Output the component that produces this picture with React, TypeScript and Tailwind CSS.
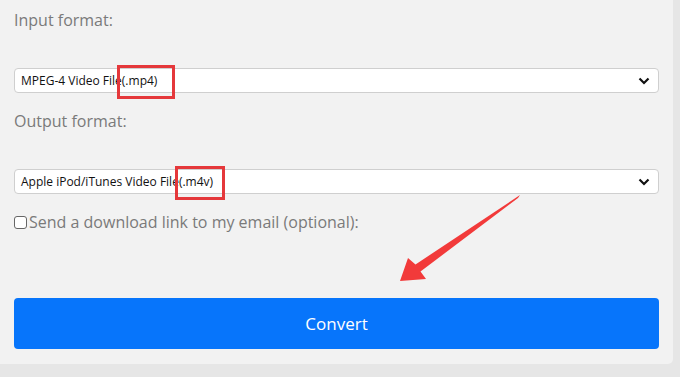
import React from "react";

const ChevronDown = () => (
  <svg width="12" height="8" viewBox="0 0 12 8" className="shrink-0">
    <path d="M1.5 1.5 L6 6 L10.5 1.5" fill="none" stroke="#111" strokeWidth="2.2" />
  </svg>
);

const FormatSelect = ({
  label,
  mark,
}: {
  label: string;
  mark: { left: number; width: number };
}) => (
  <div className="relative h-[25px] bg-white border border-[#cfcfcf] rounded-[4px] flex items-center justify-between pl-[6px] pr-[8px]">
    <span className="text-[12px] text-[#111]">{label}</span>
    <ChevronDown />
    {/* highlight box */}
    <div
      className="absolute top-[-4px] h-[34px] border-[3px] border-[#e5383b]"
      style={{ left: mark.left, width: mark.width }}
    />
  </div>
);

export default function App() {
  return (
    <div
      className="w-[680px] h-[377px] bg-[#e6e6e6] overflow-hidden relative"
      style={{ fontFamily: '"Open Sans", "Noto Sans", sans-serif' }}
    >
      <div className="w-[673px] h-[364px] bg-[#f2f2f2] rounded-br-[5px] px-[14px] pt-[8px] flex flex-col">
        <div className="text-[16px] leading-[24px] text-[#7a7a7a]">Input format:</div>
        <div className="mt-[36px]">
          <FormatSelect label="MPEG-4 Video File(.mp4)" mark={{ left: 102, width: 58 }} />
        </div>
        <div className="mt-[16px] text-[16px] leading-[24px] text-[#7a7a7a]">Output format:</div>
        <div className="mt-[36px]">
          <FormatSelect label="Apple iPod/iTunes Video File(.m4v)" mark={{ left: 160, width: 50 }} />
        </div>
        <div className="mt-[16px] flex items-center text-[16px] leading-[24px] text-[#7a7a7a]">
          <span className="w-[13px] h-[13px] border border-[#666] rounded-[3px] bg-white mr-[2px]" />
          <span>Send a download link to my email (optional):</span>
        </div>
        <button className="mt-[64px] h-[51px] w-full bg-[#0775fb] rounded-[4px] text-white text-[17px] leading-[24px]">
          Convert
        </button>
      </div>
      {/* annotation arrow */}
      <svg className="absolute left-0 top-0" width="680" height="377">
        <polygon
          points="520,195 415.5,264.5 408,258 400,281 426,279 420.5,271.5 518,198"
          fill="#f23a3a"
        />
      </svg>
    </div>
  );
}
